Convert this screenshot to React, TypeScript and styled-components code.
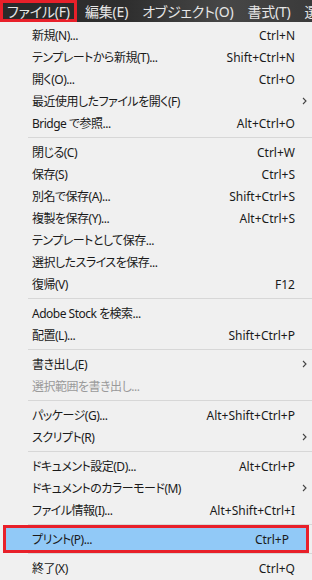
import React from 'react';
import styled, { createGlobalStyle } from 'styled-components';

type Entry =
    | { sep: true }
    | {
          label: string;
          key?: string;
          sub?: boolean;
          disabled?: boolean;
          selected?: boolean;
      };

const bar = ['ファイル(F)', '編集(E)', 'オブジェクト(O)', '書式(T)', '選択'];

const items: Entry[] = [
    { label: '新規(N)...', key: 'Ctrl+N' },
    { label: 'テンプレートから新規(T)...', key: 'Shift+Ctrl+N' },
    { label: '開く(O)...', key: 'Ctrl+O' },
    { label: '最近使用したファイルを開く(F)', sub: true },
    { label: 'Bridge で参照...', key: 'Alt+Ctrl+O' },
    { sep: true },
    { label: '閉じる(C)', key: 'Ctrl+W' },
    { label: '保存(S)', key: 'Ctrl+S' },
    { label: '別名で保存(A)...', key: 'Shift+Ctrl+S' },
    { label: '複製を保存(Y)...', key: 'Alt+Ctrl+S' },
    { label: 'テンプレートとして保存...' },
    { label: '選択したスライスを保存...' },
    { label: '復帰(V)', key: 'F12' },
    { sep: true },
    { label: 'Adobe Stock を検索...' },
    { label: '配置(L)...', key: 'Shift+Ctrl+P' },
    { sep: true },
    { label: '書き出し(E)', sub: true },
    { label: '選択範囲を書き出し...', disabled: true },
    { sep: true },
    { label: 'パッケージ(G)...', key: 'Alt+Shift+Ctrl+P' },
    { label: 'スクリプト(R)', sub: true },
    { sep: true },
    { label: 'ドキュメント設定(D)...', key: 'Alt+Ctrl+P' },
    { label: 'ドキュメントのカラーモード(M)', sub: true },
    { label: 'ファイル情報(I)...', key: 'Alt+Shift+Ctrl+I' },
    { sep: true },
    { label: 'プリント(P)...', key: 'Ctrl+P', selected: true },
    { sep: true },
    { label: '終了(X)', key: 'Ctrl+Q' },
];

const Chevron = () => (
    <svg width="5" height="8" viewBox="0 0 5 8">
        <path d="M1 1l3 3-3 3" fill="none" stroke="#444" strokeWidth="1.1" />
    </svg>
);

export default function App() {
    return (
        <>
            <GlobalStyle />
            <Frame>
                <MenuBar>
                    {bar.map((b, i) => (
                        <BarItem key={b} $active={i === 0}>
                            {b}
                        </BarItem>
                    ))}
                </MenuBar>
                <Menu>
                    {items.map((it, i) =>
                        'sep' in it ? (
                            <Separator key={i} />
                        ) : (
                            <Row
                                key={i}
                                $disabled={it.disabled}
                                $selected={it.selected}
                            >
                                <Label>{it.label}</Label>
                                <Shortcut>{it.key}</Shortcut>
                                <Arrow>{it.sub && <Chevron />}</Arrow>
                            </Row>
                        ),
                    )}
                </Menu>
            </Frame>
        </>
    );
}

const GlobalStyle = createGlobalStyle`
    body {
        margin: 0;
        background: #f0f0f0;
        font-family: "Noto Sans", "Noto Sans CJK JP", sans-serif;
        font-feature-settings: "palt";
    }
`;

const Frame = styled.div`
    width: 312px;
    height: 580px;
    overflow: hidden;
    display: flex;
    flex-direction: column;
    background: #f0f0f0;
`;

const MenuBar = styled.div`
    height: 22px;
    flex: none;
    display: flex;
    align-items: stretch;
    white-space: nowrap;
    overflow: hidden;
    background: linear-gradient(90deg, #2b2b2b 0%, #2e2e2e 40%, #474747 72%, #3a3a3a 100%);
`;

const BarItem = styled.div<{ $active?: boolean }>`
    box-sizing: border-box;
    flex: none;
    display: flex;
    align-items: center;
    justify-content: center;
    width: ${(p) => (p.$active ? '77px' : 'auto')};
    padding: ${(p) => (p.$active ? '0' : '0 6px 0 7px')};
    margin-right: 1px;
    color: #e6e6e6;
    font-size: 14px;
    letter-spacing: -0.2px;
    border: ${(p) => (p.$active ? '3px solid #e8202a' : 'none')};
    background: ${(p) => (p.$active ? '#2a2a2a' : 'transparent')};
`;

const Menu = styled.div`
    display: flex;
    flex-direction: column;
    padding-top: 2px;
`;

const Row = styled.div<{ $disabled?: boolean; $selected?: boolean }>`
    display: grid;
    grid-template-columns: 1fr auto 17px;
    align-items: center;
    height: 22px;
    padding-left: ${(p) => (p.$selected ? '26px' : '32px')};
    margin: 0 ${(p) => (p.$selected ? '6px' : '0')};
    font-size: 12px;
    color: ${(p) => (p.$disabled ? '#9a9a9a' : '#1a1a1a')};
    background: ${(p) => (p.$selected ? '#91c9f7' : 'transparent')};
    outline: ${(p) => (p.$selected ? '3px solid #e8202a' : 'none')};
    white-space: nowrap;
`;

const Label = styled.span`
    letter-spacing: -0.5px;
`;

const Shortcut = styled.span`
    text-align: right;
`;

const Arrow = styled.span`
    display: flex;
    justify-content: center;
    padding-left: 2px;
`;

const Separator = styled.div`
    height: 7px;
    display: flex;
    align-items: center;
    padding-left: 28px;

    &::after {
        content: '';
        flex: 1;
        height: 1px;
        background: #d7d7d7;
    }
`;
